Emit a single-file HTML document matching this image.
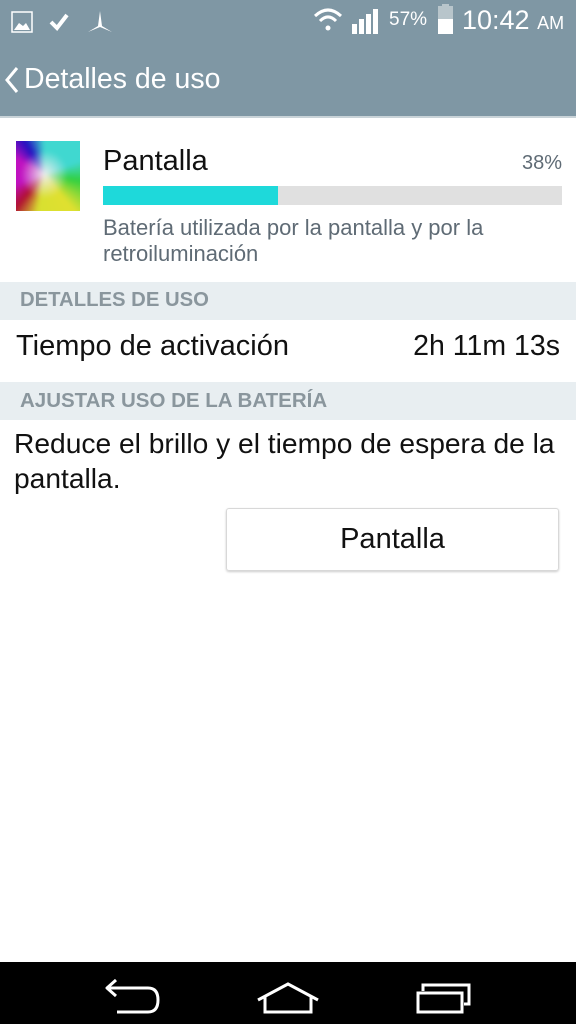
<!DOCTYPE html><html><head><style>
body{margin:0;width:576px;height:1024px;position:relative;background:#fff;font-family:"Liberation Sans",sans-serif;overflow:hidden}
.a{position:absolute;white-space:nowrap}
</style></head><body>
<div class="a" style="left:0;top:0;width:576px;height:117px;background:#7f97a4"></div>
<div class="a" style="left:0;top:116px;width:576px;height:2px;background:#c9d3d8"></div>
<svg class="a" style="left:10px;top:8px" width="110" height="28" viewBox="0 0 110 28">
<rect x="2" y="4" width="20" height="20" fill="none" stroke="#fff" stroke-width="1.5"/>
<path d="M4 22 L9 15 L13 18 L16 15 L20 22Z" fill="#fff"/>
<path d="M41 14 L47 20 L57 7" fill="none" stroke="#fff" stroke-width="4"/>
<path d="M90 3 L88 18 L78 24 L90 19 L102 24 L92 18Z" fill="#fff"/>
</svg>
<svg class="a" style="left:312px;top:6px" width="72" height="30" viewBox="0 0 72 30">
<path d="M3 10 Q16 -2 29 10" fill="none" stroke="#fff" stroke-width="3"/>
<path d="M8 15 Q16 7 24 15" fill="none" stroke="#fff" stroke-width="3"/>
<circle cx="16" cy="22" r="2.5" fill="#fff"/>
<rect x="40" y="18" width="5" height="10" fill="#fff"/><rect x="47" y="13" width="5" height="15" fill="#fff"/><rect x="54" y="8" width="5" height="20" fill="#fff"/><rect x="61" y="3" width="5" height="25" fill="#fff"/>
</svg>
<div class="a" style="left:389px;top:9px;font-size:19px;color:#fff">57%</div>
<div class="a" style="left:438px;top:6px;width:15px;height:28px;background:#b8c5cb"></div>
<div class="a" style="left:442px;top:4px;width:7px;height:3px;background:#b8c5cb"></div>
<div class="a" style="left:438px;top:19px;width:15px;height:15px;background:#fff"></div>
<div class="a" style="left:462px;top:5px;font-size:27px;color:#fff">10:42 <span style="font-size:18px">AM</span></div>
<svg class="a" style="left:4px;top:66px" width="16" height="28"><path d="M13 2 L3 14 L13 26" fill="none" stroke="#fff" stroke-width="3"/></svg>
<div class="a" style="left:24px;top:63px;font-size:28.5px;color:#fff">Detalles de uso</div>
<div class="a" style="left:16px;top:141px;width:64px;height:70px;overflow:hidden">
<div style="position:absolute;left:-6px;top:-6px;width:76px;height:82px;filter:blur(2px);background:radial-gradient(circle at 45% 48%,#eee 0,rgba(238,238,238,0) 40%),conic-gradient(from 0deg at 45% 48%,#40d8d0 0deg,#40d8d0 70deg,#30d040 100deg,#e0e030 140deg,#d8e030 190deg,#b01030 220deg,#c010c0 250deg,#c010c0 300deg,#2010c0 330deg,#40d8d0 360deg)"></div></div>
<div class="a" style="left:103px;top:145px;font-size:29px;color:#111">Pantalla</div>
<div class="a" style="right:14px;top:152px;font-size:20px;color:#5f6b75">38%</div>
<div class="a" style="left:103px;top:186px;width:459px;height:19px;background:#e0e0e0"></div>
<div class="a" style="left:103px;top:186px;width:175px;height:19px;background:#1ed9da"></div>
<div class="a" style="left:103px;top:215px;font-size:22px;color:#5f6b75;line-height:26px;white-space:normal;width:470px">Batería utilizada por la pantalla y por la retroiluminación</div>
<div class="a" style="left:0;top:282px;width:576px;height:38px;background:#e8eef1"></div>
<div class="a" style="left:20px;top:289px;font-size:20.3px;font-weight:bold;color:#8a969d">DETALLES DE USO</div>
<div class="a" style="left:16px;top:330px;font-size:29px;color:#111">Tiempo de activación</div>
<div class="a" style="right:16px;top:330px;font-size:28.5px;color:#111">2h 11m 13s</div>
<div class="a" style="left:0;top:382px;width:576px;height:38px;background:#e8eef1"></div>
<div class="a" style="left:20px;top:389px;font-size:20.5px;font-weight:bold;color:#8a969d">AJUSTAR USO DE LA BATERÍA</div>
<div class="a" style="left:14px;top:426px;font-size:28.2px;color:#111;line-height:35px;white-space:normal;width:562px">Reduce el brillo y el tiempo de espera de la pantalla.</div>
<div class="a" style="left:226px;top:508px;width:333px;height:63px;border:1px solid #d8d8d8;border-radius:3px;box-shadow:0 1px 2px #ccc;box-sizing:border-box"></div>
<div class="a" style="left:226px;top:523px;width:333px;text-align:center;font-size:29px;color:#111">Pantalla</div>
<div class="a" style="left:0;top:962px;width:576px;height:62px;background:#000"></div>
<svg class="a" style="left:0;top:962px" width="576" height="62">
<g fill="none" stroke="#fff" stroke-width="3">
<path d="M108 26 L148 26 Q158 26 158 38 Q158 50 148 50 L117 50"/><path d="M116 18 L107 26 L116 34" stroke-linejoin="round"/>
<path d="M258 38 L288 22 L318 38"/><path d="M265 35 L265 50 L311 50 L311 35"/>
<rect x="418" y="31" width="44" height="19"/><path d="M423 29 L423 23 L469 23 L469 42 L464 42"/>
</g></svg>
</body></html>
